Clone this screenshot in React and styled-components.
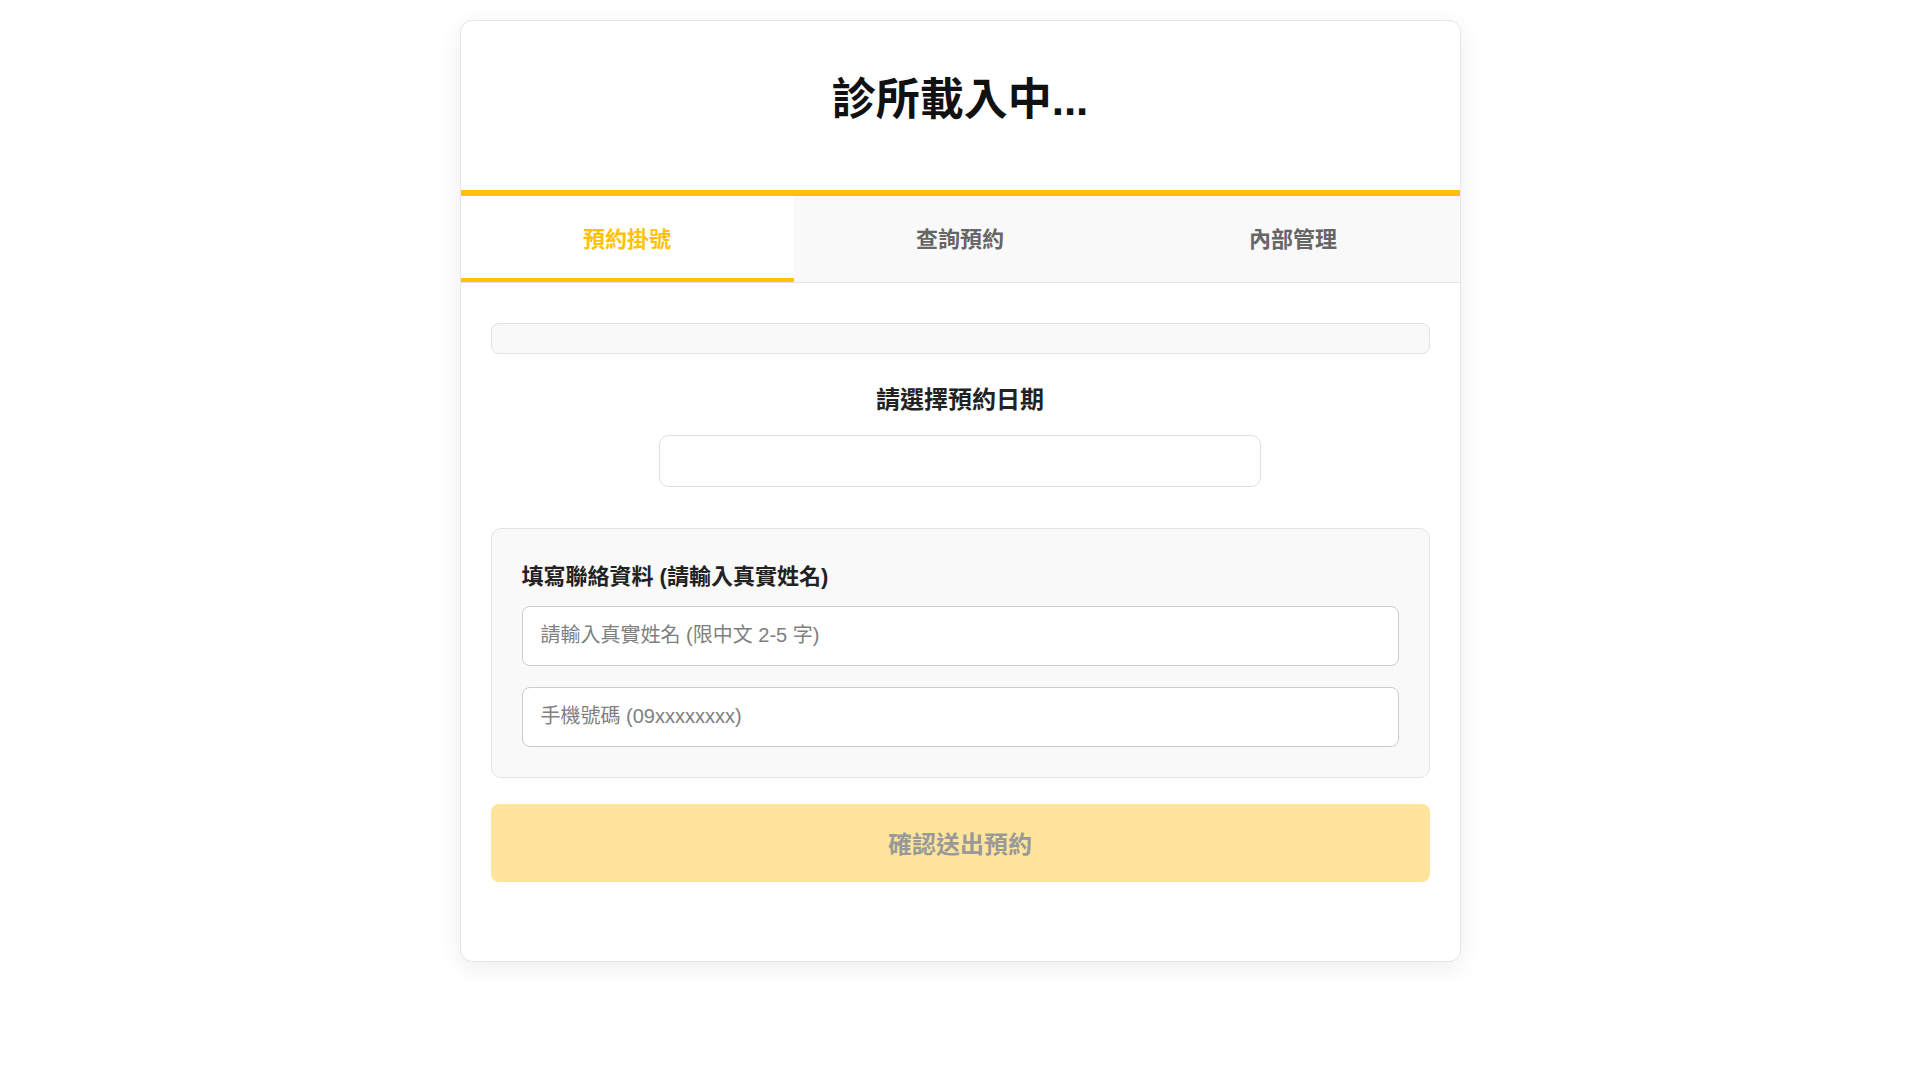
import React from "react";
import styled, { createGlobalStyle } from "styled-components";

const GlobalStyle = createGlobalStyle`
  * { box-sizing: border-box; }
  html, body { margin: 0; padding: 0; background: #ffffff; }
  body {
    font-family: "Liberation Sans", "Noto Sans CJK TC", sans-serif;
    color: #222;
  }
`;

const Page = styled.div`
  padding: 20px 0;
  display: flex;
  justify-content: center;
`;

const Card = styled.div`
  width: 1001px;
  background: #fff;
  border: 1px solid #e6e6e6;
  border-radius: 12px;
  overflow: hidden;
  box-shadow: 0 6px 24px rgba(0, 0, 0, 0.07);
`;

const Header = styled.header`
  padding: 53px 20px 63px;
  text-align: center;
  border-bottom: 6px solid #ffc107;
`;

const Title = styled.h1`
  margin: 0;
  font-size: 44px;
  line-height: 1.2;
  font-weight: 700;
  color: #111;
`;

const TabBar = styled.nav`
  display: flex;
  background: #f9f9f9;
  border-bottom: 1px solid #e2e2e2;
`;

const Tab = styled.button`
  flex: 1;
  height: 86px;
  border: none;
  border-bottom: 4px solid ${(p) => (p.$active ? "#ffc107" : "transparent")};
  background: ${(p) => (p.$active ? "#ffffff" : "transparent")};
  color: ${(p) => (p.$active ? "#ffc107" : "#666666")};
  font-family: inherit;
  font-size: 22px;
  font-weight: 700;
  cursor: pointer;
  padding: 0;
`;

const Body = styled.main`
  padding: 40px 30px 79px;
  display: flex;
  flex-direction: column;
`;

const Notice = styled.div`
  height: 31px;
  background: #f9f9f9;
  border: 1px solid #e2e2e2;
  border-radius: 8px;
`;

const SectionTitle = styled.h2`
  margin: 28px 0 17px;
  font-size: 24px;
  line-height: 36px;
  font-weight: 700;
  color: #222;
  text-align: center;
`;

const DateBox = styled.div`
  width: 602px;
  height: 52px;
  align-self: center;
  background: #fff;
  border: 1px solid #e0e0e0;
  border-radius: 10px;
`;

const ContactBox = styled.section`
  margin-top: 41px;
  padding: 30px;
  background: #f9f9f9;
  border: 1px solid #e4e4e4;
  border-radius: 10px;
  display: flex;
  flex-direction: column;
  gap: 21px;
`;

const ContactTitle = styled.h3`
  margin: 1px 0 -8px;
  font-size: 22px;
  line-height: 33px;
  font-weight: 700;
  color: #222;
`;

const TextInput = styled.input`
  width: 100%;
  height: 60px;
  padding: 0 18px;
  border: 1px solid #cccccc;
  border-radius: 8px;
  background: #fff;
  font-family: "Liberation Sans", "Noto Sans CJK TC", sans-serif;
  font-size: 20px;
  color: #222;
  outline: none;
  &::placeholder { color: #808080; }
`;

const SubmitButton = styled.button`
  margin-top: 26px;
  height: 78px;
  width: 100%;
  border: none;
  border-radius: 8px;
  background: #ffe59b;
  color: #999999;
  font-family: inherit;
  font-size: 24px;
  font-weight: 700;
  cursor: not-allowed;
`;

export default function App() {
  return (
    <>
      <GlobalStyle />
      <Page>
        <Card>
          <Header>
            <Title>診所載入中...</Title>
          </Header>
          <TabBar>
            <Tab $active>預約掛號</Tab>
            <Tab>查詢預約</Tab>
            <Tab>內部管理</Tab>
          </TabBar>
          <Body>
            <Notice />
            <SectionTitle>請選擇預約日期</SectionTitle>
            <DateBox />
            <ContactBox>
              <ContactTitle>填寫聯絡資料 (請輸入真實姓名)</ContactTitle>
              <TextInput type="text" placeholder="請輸入真實姓名 (限中文 2-5 字)" />
              <TextInput type="tel" placeholder="手機號碼 (09xxxxxxxx)" />
            </ContactBox>
            <SubmitButton disabled>確認送出預約</SubmitButton>
          </Body>
        </Card>
      </Page>
    </>
  );
}
